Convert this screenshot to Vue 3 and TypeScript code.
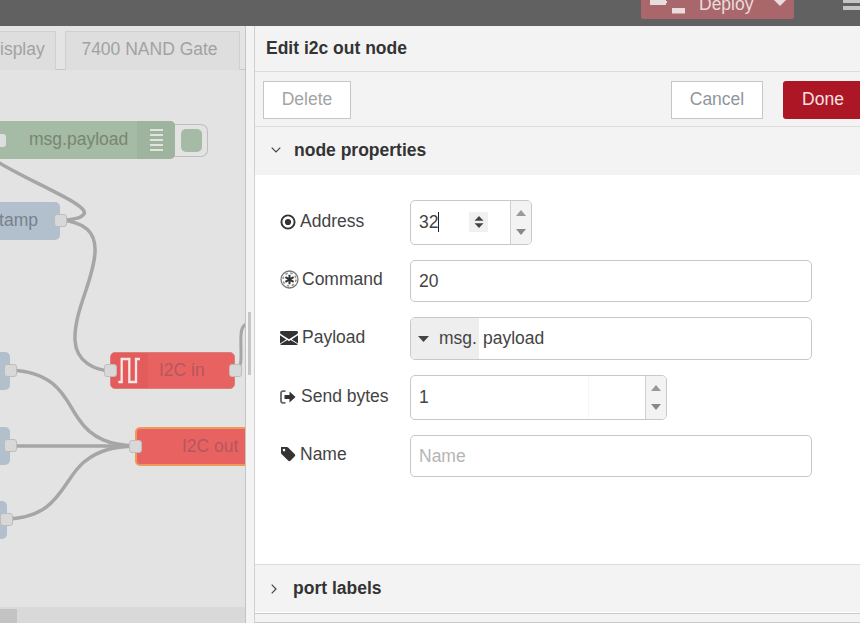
<script setup lang="ts">
const stubs = [
  { cls: 'stub-a' },
  { cls: 'stub-b' },
  { cls: 'stub-c' },
];
</script>

<template>
  <div class="app">
    <header class="topbar">
      <div class="deploy">
        <svg class="deploy-icon" width="36" height="19" viewBox="0 0 36 19">
          <rect x="0" y="0" width="16" height="5" fill="#e8dcdd" />
          <rect x="14" y="1" width="3" height="2" fill="#e8dcdd" />
          <rect x="22" y="8" width="13" height="5.5" fill="#e8dcdd" />
        </svg>
        <span class="deploy-label">Deploy</span>
        <svg class="deploy-caret" width="14" height="6" viewBox="0 0 14 6"><path d="M1 0h12l-6 6z" fill="#e8dcdd" /></svg>
      </div>
      <div class="burger"><i></i><i></i></div>
    </header>

    <main class="workspace">
      <section class="canvas">
        <nav class="tabs">
          <div class="tab tab-cut"><span>isplay</span></div>
          <div class="tab tab-nand">7400 NAND Gate</div>
        </nav>

        <svg class="wires" width="245" height="623" viewBox="0 0 245 623" fill="none">
          <g stroke="#a6a6a6" stroke-width="3.5">
            <path d="M-2 162 C 30 182, 90 205, 84 214 C 80 220, 66 220, 60 220" />
            <path d="M60 220 C 85 222, 96 232, 95 252 C 94 280, 74 310, 75 340 C 76 362, 95 370, 110 371" />
            <path d="M10 370 C 60 372, 66 402, 78 418 C 92 440, 112 445, 135 446" />
            <path d="M10 446 L135 446" />
            <path d="M6 519 C 60 518, 62 480, 84 462 C 100 449, 115 447, 135 446" />
            <path d="M235 370 C 244 370, 240 350, 241 335 C 241 330, 243 326, 246 324" stroke-width="3" />
          </g>
        </svg>

        <div class="node green">
          <span class="node-label">msg.payload</span>
          <span class="debug-tab">
            <i></i><i></i><i></i><i></i><i></i>
          </span>
        </div>
        <div class="debug-btn"><i></i></div>
        <span class="port port-green"></span>

        <div class="node blue stamp"><span>tamp</span></div>
        <span class="port port-stamp"></span>

        <div v-for="s in stubs" :key="s.cls" class="node blue stub" :class="s.cls"></div>
        <span class="port port-a"></span>
        <span class="port port-b"></span>
        <span class="port port-c"></span>

        <div class="node red i2c-in">
          <span class="icon-tab">
            <svg width="25" height="31" viewBox="0 0 25 31" fill="none">
              <path d="M1.300 27H4.700V4H12.300V27H19V4H23" stroke="#f6e6e6" stroke-width="2.300" />
            </svg>
          </span>
          <span class="red-label">I2C in</span>
        </div>
        <span class="port port-in-l"></span>
        <span class="port port-in-r"></span>

        <div class="node red i2c-out"><span class="red-label">I2C out</span></div>
        <span class="port port-out"></span>

        <div class="hscroll"><i></i></div>
      </section>

      <div class="divider"><i></i></div>

      <aside class="tray">
        <h1 class="tray-title">Edit i2c out node</h1>
        <div class="toolbar">
          <button class="btn btn-delete">Delete</button>
          <span class="spacer"></span>
          <button class="btn btn-cancel">Cancel</button>
          <button class="btn btn-done">Done</button>
        </div>

        <div class="section-head">
          <svg width="10" height="6" viewBox="0 0 10 6" fill="none"><path d="M.7.7 5 5 9.3.7" stroke="#444" stroke-width="1.2" /></svg>
          <span>node properties</span>
        </div>

        <form class="form" @submit.prevent>
          <div class="row row-address">
            <label>
              <svg class="ico" width="16" height="16" viewBox="0 0 16 16">
                <circle cx="8" cy="8" r="6.6" fill="none" stroke="#333" stroke-width="1.9" />
                <circle cx="8" cy="8" r="3.1" fill="#333" />
              </svg>
              Address
            </label>
            <div class="field w-address">
              <span class="val">32<b class="caret"></b></span>
              <span class="inner-spin">
                <svg width="12" height="14" viewBox="0 0 12 14"><path d="M1.5 5.8 6 1l4.500 4.800zM1.500 8.200h9L6 13z" fill="#444" /></svg>
              </span>
              <span class="spin">
                <svg width="10" height="6" viewBox="0 0 10 6"><path d="M0 6 5 0l5 6z" fill="#999" /></svg>
                <svg width="10" height="6" viewBox="0 0 10 6"><path d="M0 0h10L5 6z" fill="#888" /></svg>
              </span>
            </div>
          </div>

          <div class="row row-command">
            <label>
              <svg class="ico" width="19" height="19" viewBox="0 0 19 19" fill="none">
                <circle cx="9.500" cy="9.500" r="8.500" stroke="#777" stroke-width="1.300" />
                <circle cx="9.500" cy="9.500" r="6.500" stroke="#999" stroke-width="1.600" stroke-dasharray="2.600 2.500" />
                <path d="M9.500 4.800v9.400M5.400 7.100l8.200 4.800M13.600 7.100l-8.200 4.800" stroke="#333" stroke-width="2" />
              </svg>
              Command
            </label>
            <div class="field w-full"><span class="val">20</span></div>
          </div>

          <div class="row row-payload">
            <label>
              <svg class="ico" width="18" height="14" viewBox="0 0 18 14">
                <path d="M1.400 0h15.200c.8 0 1.400.6 1.400 1.400 0 .8-.5 1.400-1.100 1.900L9 8.200 1.100 3.300C.5 2.800 0 2.200 0 1.400 0 .6.600 0 1.400 0zM0 4.300l6.300 4.100L0 12.600zM18 4.300v8.300l-6.300-4.200zM7.400 9.100 9 10.200l1.600-1.100L17.800 13.300c-.2.400-.7.700-1.200.7H1.400c-.5 0-1-.3-1.200-.7z" fill="#333" />
              </svg>
              Payload
            </label>
            <div class="field w-full typed">
              <span class="type-btn">
                <svg width="11" height="6" viewBox="0 0 11 6"><path d="M0 0h11L5.500 6z" fill="#444" /></svg>
                <span>msg.</span>
              </span>
              <span class="val">payload</span>
            </div>
          </div>

          <div class="row row-bytes">
            <label>
              <svg class="ico" width="16" height="14" viewBox="0 0 16 14" fill="none">
                <path d="M5.500 1.200H3C1.800 1.200 1 2 1 3.200v7.600c0 1.200.8 2 2 2h2.500" stroke="#666" stroke-width="1.800" />
                <path d="M4.500 5h5V1.500L15.500 7l-6 5.500V9h-5z" fill="#333" />
              </svg>
              Send bytes
            </label>
            <div class="field w-bytes">
              <span class="val">1</span>
              <span class="faint"></span>
              <span class="spin">
                <svg width="10" height="6" viewBox="0 0 10 6"><path d="M0 6 5 0l5 6z" fill="#999" /></svg>
                <svg width="10" height="6" viewBox="0 0 10 6"><path d="M0 0h10L5 6z" fill="#888" /></svg>
              </span>
            </div>
          </div>

          <div class="row row-name">
            <label>
              <svg class="ico" width="16" height="16" viewBox="0 0 16 16">
                <path d="M1.300 1h5.500c.5 0 1 .2 1.300.5l6.700 6.700c.6.600.6 1.500 0 2.100l-4.400 4.400c-.6.6-1.500.6-2.100 0L1.500 8C1.200 7.700 1 7.200 1 6.700V1.300C1 1.100 1.100 1 1.300 1zM4 2.800a1.300 1.300 0 1 0 0 2.600 1.300 1.300 0 0 0 0-2.600z" fill="#333" fill-rule="evenodd" />
              </svg>
              Name
            </label>
            <input class="field w-full name-input" type="text" placeholder="Name" />
          </div>
        </form>

        <div class="section-head section-ports">
          <svg width="6" height="10" viewBox="0 0 6 10" fill="none"><path d="M.7.7 5 5 .7 9.300" stroke="#444" stroke-width="1.200" /></svg>
          <span>port labels</span>
        </div>
        <div class="tray-foot"></div>
      </aside>
    </main>
  </div>
</template>

<style>
html, body { margin: 0; height: 100%; overflow: hidden; }
</style>

<style scoped>
.app {
  width: 860px;
  height: 623px;
  display: flex;
  flex-direction: column;
  overflow: hidden;
  font-family: "Liberation Sans", Arial, sans-serif;
  color: #333;
}

.topbar {
  height: 26px;
  flex: none;
  background: #616161;
  position: relative;
  display: flex;
  justify-content: flex-end;
}
.deploy {
  width: 153px;
  height: 19px;
  margin-right: 66px;
  background: #a9666b;
  border-radius: 0 0 2px 2px;
  position: relative;
  overflow: hidden;
  color: #e8dcdd;
  font-size: 17.500px;
}
.deploy-icon { position: absolute; left: 9px; top: 0; }
.deploy-label { position: absolute; left: 58px; top: -6px; line-height: 20px; }
.deploy-caret { position: absolute; left: 132px; top: 0; }
.burger {
  position: absolute;
  right: 0;
  top: 0;
  width: 17px;
  display: flex;
  flex-direction: column;
  gap: 3px;
}
.burger i { height: 4px; background: #c5c5c5; display: block; }
.burger i:first-child { height: 3px; }

.workspace { flex: 1; display: flex; min-height: 0; }

.canvas {
  width: 245px;
  flex: none;
  position: relative;
  overflow: hidden;
  background: #e3e3e3;
}
.tabs {
  height: 44px;
  box-sizing: border-box;
  border-bottom: 1px solid #c6c6c6;
  padding-top: 5px;
  display: flex;
  gap: 9px;
  background: #e4e4e4;
}
.tab {
  height: 39px;
  box-sizing: border-box;
  border: 1px solid #d0d0d0;
  border-bottom: none;
  background: #dedede;
  color: #a2a2a2;
  font-size: 17.500px;
  line-height: 35px;
  text-align: center;
}
.tab-cut { width: 56px; border-left: none; text-align: right; padding-right: 11px; }
.tab-nand { width: 175px; padding-right: 6px; }

.wires { position: absolute; left: 0; top: -26px; pointer-events: none; }

.node {
  position: absolute;
  height: 38px;
  box-sizing: border-box;
  border-radius: 5px;
  font-size: 17.500px;
  color: #7b8a7b;
}
.green {
  left: -6px;
  top: 95px;
  width: 181px;
  background: #a6bba5;
  display: flex;
  align-items: center;
  padding-bottom: 2px;
}
.node-label { margin-left: 35px; color: #76876f; }
.debug-tab {
  position: absolute;
  right: 0;
  top: 0;
  width: 38px;
  height: 38px;
  background: #9fb49e;
  border-radius: 0 5px 5px 0;
  display: flex;
  flex-direction: column;
  justify-content: center;
  align-items: center;
  gap: 2.500px;
}
.debug-tab i { width: 13px; height: 2.500px; background: #dfe5dc; display: block; }
.debug-btn {
  position: absolute;
  left: 171px;
  top: 98px;
  width: 37px;
  height: 33px;
  box-sizing: border-box;
  border: 1px solid #bdbdbd;
  border-left: none;
  border-radius: 0 7px 7px 0;
  background: #e3e3e3;
  display: flex;
  align-items: center;
  justify-content: flex-end;
  padding-right: 5px;
  clip-path: inset(0 0 0 4px);
}
.debug-btn i { width: 21px; height: 23px; border-radius: 5px; background: #a6bba5; display: block; }

.blue { background: #b2bfcd; color: #76818c; }
.stamp { left: -60px; top: 176px; width: 120px; display: flex; align-items: center; justify-content: flex-end; padding-right: 22px; padding-bottom: 2px; }
.stub { width: 30px; left: -20px; }
.stub-a { top: 326px; }
.stub-b { top: 401px; }
.stub-c { top: 475px; left: -23px; }

.red {
  background: #e96262;
  color: #b4565a;
}
.red-label { color: #b3585c; }
.i2c-in {
  left: 110px;
  top: 326px;
  width: 125px;
  height: 37px;
  border: 1px solid #d9807f;
  display: flex;
  align-items: center;
}
.icon-tab {
  width: 37px;
  height: 100%;
  background: #e45b5b;
  border-radius: 4px 0 0 4px;
  display: flex;
  align-items: center;
  padding-left: 7px;
  box-sizing: border-box;
  flex: none;
}
.icon-tab svg { margin-left: -1px; }
.i2c-in .red-label { margin-left: 11px; }
.i2c-out {
  left: 135px;
  top: 401px;
  width: 120px;
  height: 39px;
  border: 2px solid #ee9a5a;
  display: flex;
  align-items: center;
}
.i2c-out .red-label { margin-left: 45px; }

.port {
  position: absolute;
  width: 13px;
  height: 13px;
  box-sizing: border-box;
  border: 1px solid #bdbdbd;
  border-radius: 3px;
  background: #d8d8d8;
}
.port-green { left: -6px; top: 108px; background: #dedede; border: none; width: 12px; }
.port-stamp { left: 54px; top: 188px; }
.port-a { left: 4px; top: 338px; }
.port-b { left: 4px; top: 413px; }
.port-c { left: 0; top: 487px; }
.port-in-l { left: 104px; top: 338px; }
.port-in-r { left: 229px; top: 338px; }
.port-out { left: 129px; top: 414px; }

.hscroll {
  position: absolute;
  left: 0;
  right: 0;
  bottom: 0;
  height: 16px;
  background: #d9d9d9;
}
.hscroll i { display: block; width: 17px; height: 14px; margin-top: 2px; background: #c3c3c3; }

.divider {
  width: 10px;
  flex: none;
  box-sizing: border-box;
  background: #f3f3f3;
  border-left: 1px solid #c4c4c4;
  border-right: 1px solid #d0d0d0;
  position: relative;
}
.divider i {
  position: absolute;
  left: 2px;
  top: 286px;
  width: 3px;
  height: 63px;
  background: #c6c6c6;
}

.tray { flex: 1; display: flex; flex-direction: column; min-width: 0; background: #fff; overflow: hidden; }
.tray-title {
  margin: 0;
  height: 46px;
  box-sizing: border-box;
  background: #f3f3f3;
  border-bottom: 1px solid #dcdcdc;
  font-size: 17.500px;
  font-weight: bold;
  line-height: 45px;
  padding-left: 11px;
  color: #333;
}
.toolbar {
  height: 55px;
  box-sizing: border-box;
  background: #f3f3f3;
  border-bottom: 1px solid #dcdcdc;
  padding: 9px 0 0 8px;
  display: flex;
  align-items: flex-start;
}
.spacer { flex: 1; }
.btn {
  height: 38px;
  box-sizing: border-box;
  font: 17.500px "Liberation Sans", Arial, sans-serif;
  background: #fff;
  border: 1px solid #c6c6c6;
  color: #a4a4a4;
  padding: 0 0 2px;
}
.btn-delete { width: 88px; }
.btn-cancel { width: 92px; color: #8f969c; }
.btn-done {
  width: 80px;
  margin-left: 20px;
  margin-right: -3px;
  background: #ad1625;
  border: none;
  border-radius: 3px 0 0 3px;
  color: #f8e4e4;
}

.section-head {
  height: 48px;
  flex: none;
  box-sizing: border-box;
  background: #f3f3f3;
  display: flex;
  align-items: center;
  font-size: 17.500px;
  font-weight: bold;
  color: #333;
  padding-left: 16px;
  padding-bottom: 2px;
  gap: 13px;
}
.section-ports { gap: 16px; padding-bottom: 0; border-top: 1px solid #dcdcdc; }

.form { flex: 1; padding: 25px 0 0 25px; box-sizing: border-box; }
.row { display: flex; align-items: center; position: relative; }
.row label {
  width: 130px;
  flex: none;
  display: flex;
  align-items: center;
  gap: 4px;
  font-size: 17.500px;
  color: #444;
  margin-top: -2px;
}
.row-command label { gap: 3px; margin-top: -4px; }
.row-bytes label { gap: 5px; }
.row-name label { gap: 4px; margin-top: -4px; }
.row-address { height: 45px; margin-bottom: 15px; }
.row-command { height: 42px; margin-bottom: 15px; }
.row-payload { height: 43px; margin-bottom: 15px; }
.row-bytes { height: 45px; margin-bottom: 15px; }
.row-name { height: 42px; }
.ico { flex: none; }

.field {
  height: 100%;
  box-sizing: border-box;
  border: 1px solid #c8c8c8;
  border-radius: 5px;
  background: #fff;
  display: flex;
  align-items: center;
  position: relative;
  overflow: hidden;
  font-size: 17.500px;
  color: #444;
  padding-left: 8px;
}
.w-address { width: 122px; }
.w-bytes { width: 257px; }
.w-full { width: 402px; }
.val { white-space: nowrap; }
.caret {
  display: inline-block;
  width: 1px;
  height: 20px;
  background: #222;
  vertical-align: -4px;
}
.inner-spin {
  position: absolute;
  left: 58px;
  top: 11px;
  width: 19px;
  height: 20px;
  background: #f0f0f0;
  display: flex;
  align-items: center;
  justify-content: center;
}
.spin {
  position: absolute;
  right: 0;
  top: 0;
  bottom: 0;
  width: 21px;
  box-sizing: border-box;
  background: #f3f3f3;
  border-left: 1px solid #d0d0d0;
  display: flex;
  flex-direction: column;
  align-items: center;
  justify-content: center;
  gap: 13px;
}
.faint {
  position: absolute;
  left: 177px;
  top: 0;
  bottom: 0;
  width: 1px;
  background: #f6f6f6;
}
.typed { padding-left: 0; }
.type-btn {
  height: 100%;
  width: 68px;
  flex: none;
  box-sizing: border-box;
  background: #eeeeee;
  display: flex;
  align-items: center;
  padding-left: 7px;
  gap: 10px;
  margin-right: 4px;
}
.name-input {
  font: 17.500px "Liberation Sans", Arial, sans-serif;
  outline: none;
}
.name-input::placeholder { color: #b5b5b5; opacity: 1; }

.tray-foot {
  height: 8px;
  flex: none;
  background: #f3f3f3;
  border-top: 1px solid #c8c8c8;
  border-bottom: 1px solid #c8c8c8;
  margin-top: 1px;
}
</style>
